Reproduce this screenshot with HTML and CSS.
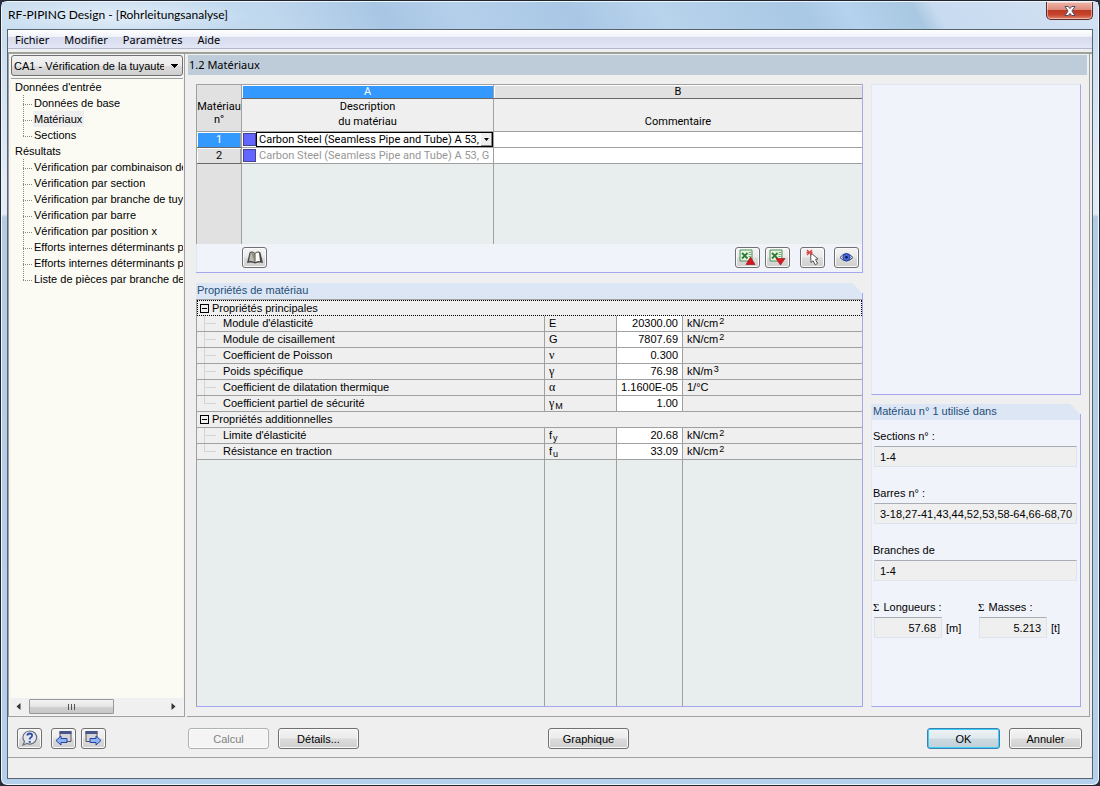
FILE: index.html
```html
<!DOCTYPE html>
<html lang="fr">
<head>
<meta charset="utf-8">
<title>RF-PIPING Design - [Rohrleitungsanalyse]</title>
<link rel="stylesheet" href="styles.css">
</head>
<body>
<div class="window">
  <header class="titlebar">
    <h1 class="title">RF-PIPING Design - [Rohrleitungsanalyse]</h1>
    <button class="close" aria-label="Fermer"><svg width="14" height="12" viewBox="0 0 14 12"><path d="M2 1.500h3.200L7 3.600 8.800 1.500H12L8.900 6l3.100 4.500H8.800L7 8.400l-1.800 2.100H2L5.100 6z" fill="#fff" stroke="#4c4e66" stroke-width="1"/></svg></button>
  </header>
  <div class="client">
    <nav class="menu">
      <button>Fichier</button><button>Modifier</button><button>Paramètres</button><button>Aide</button>
    </nav>
    <div class="workspace">
      <aside class="sidebar">
        <select class="case" aria-label="Cas"><option>CA1 - Vérification de la tuyaute</option></select>
        <div class="tree">
          <p>Données d'entrée</p>
          <ul>
            <li><span>Données de base</span></li>
            <li><span class="current">Matériaux</span></li>
            <li><span>Sections</span></li>
          </ul>
          <p>Résultats</p>
          <ul>
            <li><span>Vérification par combinaison de</span></li>
            <li><span>Vérification par section</span></li>
            <li><span>Vérification par branche de tuy</span></li>
            <li><span>Vérification par barre</span></li>
            <li><span>Vérification par position x</span></li>
            <li><span>Efforts internes déterminants p</span></li>
            <li><span>Efforts internes déterminants p</span></li>
            <li><span>Liste de pièces par branche de</span></li>
          </ul>
        </div>
        <div class="scroll">
          <svg width="5" height="7" viewBox="0 0 5 7"><path d="M4.500 0v7L.5 3.500z" fill="#333"/></svg>
          <div class="track"><div class="thumb"><i></i><i></i><i></i></div></div>
          <svg width="5" height="7" viewBox="0 0 5 7"><path d="M.5 0v7l4-3.500z" fill="#333"/></svg>
        </div>
      </aside>
      <main class="main">
        <h2 class="page-title">1.2 Matériaux</h2>
        <div class="columns">
          <div class="left">
            <section class="panel">
              <div class="grid-wrap top">
                <table class="materials">
                  <colgroup><col class="c-no"><col class="c-desc"><col></colgroup>
                  <thead>
                    <tr class="letters"><th rowspan="2" class="corner">Matériau<br>n°</th><th class="selected">A</th><th>B</th></tr>
                    <tr class="heads"><th>Description<br>du matériau</th><th class="low">Commentaire</th></tr>
                  </thead>
                  <tbody>
                    <tr><th class="num selected">1</th><td><div class="mat"><i class="swatch"></i><div class="combo"><span>Carbon Steel (Seamless Pipe and Tube) A 53, G</span><button aria-label="Ouvrir"><svg width="5" height="3" viewBox="0 0 5 3"><path d="M0 0h5L2.500 3z"/></svg></button></div></div></td><td></td></tr>
                    <tr><th class="num">2</th><td><div class="mat"><i class="swatch"></i><span class="dim">Carbon Steel (Seamless Pipe and Tube) A 53, G</span></div></td><td></td></tr>
                    <tr class="filler"><th></th><td></td><td></td></tr>
                  </tbody>
                </table>
              </div>
              <div class="tools">
                <button class="btn icon" aria-label="Bibliothèque"><svg width="18" height="15" viewBox="0 0 18 15"><path d="M1 13 3.500 2.500Q6 .5 9 3 12 .5 14.500 2.500L17 13q-4-1-8 .5-4-1.500-8-.5z" fill="#4a4a4a"/><path d="M3 11 4.500 3Q6.500 1.800 8.500 3.500V12Q6 10.500 3 11z" fill="#bdb9ae"/><path d="M9.500 3.500q2-1.700 3.500-.7l1 8.400q-2.500-.5-4.500 1z" fill="#fffef4"/><path d="M5.500 3 8.500 4v8z" fill="#8a867c"/></svg></button>
                <span class="space"></span>
                <button class="btn icon" aria-label="Exporter"><svg width="19" height="17" viewBox="0 0 19 17"><path d="M2 1h12v11H2z" fill="#e8f3e4" stroke="#4a9050"/><path d="M10.500 3.500h3M10.500 5.500h3M10.500 7.500h3" stroke="#7db27c"/><path d="M4 4 9.500 9.500M9.500 4 4 9.500" stroke="#2d7b35" stroke-width="1.800"/><path d="m12.500 8 4.500 7.500H8z" fill="#d81620" stroke="#8a0d12" stroke-width=".6"/></svg></button>
                <button class="btn icon g5" aria-label="Importer"><svg width="19" height="17" viewBox="0 0 19 17"><path d="M2 1h12v11H2z" fill="#e8f3e4" stroke="#4a9050"/><path d="M10.500 3.500h3M10.500 5.500h3M10.500 7.500h3" stroke="#7db27c"/><path d="M4 4 9.500 9.500M9.500 4 4 9.500" stroke="#2d7b35" stroke-width="1.800"/><path d="M8 9.500h9L12.500 16z" fill="#e01822" stroke="#8a0d12" stroke-width=".6"/></svg></button>
                <button class="btn icon g10" aria-label="Sélectionner"><svg width="18" height="17" viewBox="0 0 18 17"><path d="M6.500 3.500 14 10l-2.500.4 2 4-2.200 1.400-2.200-4L7 13.500z" fill="#fff" stroke="#444" stroke-width=".9"/><path d="M3 1 8 6M8 1 3 6M2.500 3.500h6" stroke="#d9444a" stroke-width="1.300"/></svg></button>
                <button class="btn icon g9" aria-label="Afficher"><svg width="17" height="15" viewBox="0 0 17 15"><path d="M2 7.500Q8-.5 15 7.500q-7 7-13 0z" fill="#d9dce8" stroke="#444b66" stroke-width="1"/><circle cx="8.500" cy="7.300" r="3.600" fill="#4a6be0" stroke="#2a44a4"/><circle cx="8.500" cy="7.300" r="1.200" fill="#0a1440"/></svg></button>
              </div>
            </section>
            <section class="panel props">
              <h3 class="panel-title">Propriétés de matériau</h3>
              <div class="grid-wrap">
                <table class="properties">
                  <colgroup><col class="c-name"><col class="c-sym"><col class="c-val"><col></colgroup>
                  <tbody>
                    <tr class="group focus"><th colspan="4"><div class="grp"><i class="minus"></i>Propriétés principales</div></th></tr>
                    <tr><th><div class="leaf">Module d'élasticité</div></th><td>E</td><td class="v">20300.00</td><td>kN/cm<sup>2</sup></td></tr>
                    <tr><th><div class="leaf">Module de cisaillement</div></th><td>G</td><td class="v">7807.69</td><td>kN/cm<sup>2</sup></td></tr>
                    <tr><th><div class="leaf">Coefficient de Poisson</div></th><td class="gr">ν</td><td class="v">0.300</td><td></td></tr>
                    <tr><th><div class="leaf">Poids spécifique</div></th><td class="gr">γ</td><td class="v">76.98</td><td>kN/m<sup>3</sup></td></tr>
                    <tr><th><div class="leaf">Coefficient de dilatation thermique</div></th><td class="gr">α</td><td class="v">1.1600E-05</td><td>1/°C</td></tr>
                    <tr><th><div class="leaf last">Coefficient partiel de sécurité</div></th><td class="gr">γ<sub>M</sub></td><td class="v">1.00</td><td></td></tr>
                    <tr class="group"><th colspan="4"><div class="grp"><i class="minus"></i>Propriétés additionnelles</div></th></tr>
                    <tr><th><div class="leaf">Limite d'élasticité</div></th><td>f<sub>y</sub></td><td class="v">20.68</td><td>kN/cm<sup>2</sup></td></tr>
                    <tr><th><div class="leaf last">Résistance en traction</div></th><td>f<sub>u</sub></td><td class="v">33.09</td><td>kN/cm<sup>2</sup></td></tr>
                    <tr class="filler"><th></th><td></td><td></td><td></td></tr>
                  </tbody>
                </table>
              </div>
            </section>
          </div>
          <div class="right">
            <section class="panel preview"></section>
            <section class="panel used">
              <h3 class="panel-title">Matériau n° 1 utilisé dans</h3>
              <div class="form">
                <div class="field"><label for="sec">Sections n° :</label><input id="sec" readonly value="1-4"></div>
                <div class="field"><label for="bar">Barres n° :</label><input id="bar" readonly value="3-18,27-41,43,44,52,53,58-64,66-68,70"></div>
                <div class="field"><label for="bra">Branches de</label><input id="bra" readonly value="1-4"></div>
                <div class="pair">
                  <div class="field"><label for="len"><span class="sum">Σ</span> Longueurs :</label><div class="unit"><input id="len" readonly value="57.68">[m]</div></div>
                  <div class="field"><label for="mas"><span class="sum">Σ</span> Masses :</label><div class="unit"><input id="mas" readonly value="5.213">[t]</div></div>
                </div>
              </div>
            </section>
          </div>
        </div>
      </main>
    </div>
    <footer class="actions">
      <button class="btn icon" aria-label="Aide"><svg width="19" height="17" viewBox="0 0 19 17"><path d="M9.500 1a7 6.500 0 1 1-2.500 12.500L3 15l1.500-3.500A7 6.500 0 0 1 9.500 1z" fill="#e6e8ee" stroke="#6b6f7c" stroke-width="1.200"/><path d="M7.200 5.500q.3-2 2.600-2 2.400.1 2.300 2 0 1.300-1.300 2-1.200.7-1.100 2" fill="none" stroke="#2d4da6" stroke-width="1.800"/><path d="M8.700 11h2v1.800h-2z" fill="#2d4da6"/></svg></button>
      <button class="btn icon g9" aria-label="Précédent"><svg width="19" height="17" viewBox="0 0 19 17"><path d="M6 1.500h11v10H6z" fill="#d4d5d9" stroke="#555"/><path d="M5.500 1h12v3h-12z" fill="#4a5688"/><path d="m2 10.500 5-4.500v2.500h6v4H7V15z" fill="#8fb4f4" stroke="#2344a4"/></svg></button>
      <button class="btn icon g5" aria-label="Suivant"><svg width="19" height="17" viewBox="0 0 19 17"><path d="M2 1.500h11v10H2z" fill="#d4d5d9" stroke="#555"/><path d="M1.500 1h12v3h-12z" fill="#4a5688"/><path d="m17 10.500-5-4.500v2.500H6v4h6V15z" fill="#8fb4f4" stroke="#2344a4"/></svg></button>
      <button class="btn wide calc" disabled>Calcul</button>
      <button class="btn wide g9">Détails...</button>
      <button class="btn wide graph">Graphique</button>
      <span class="space"></span>
      <button class="btn mid ok">OK</button>
      <button class="btn mid g9">Annuler</button>
    </footer>
    <div class="status"></div>
  </div>
</div>
</body>
</html>
```
FILE: styles.css
```css
* { box-sizing: border-box; }
body { margin: 0; background: #2a2e3c; font: 11px/16px "Liberation Sans", Arial, sans-serif; color: #000; }
button, input, select { font: inherit; color: inherit; margin: 0; }
h1, h2, h3, p, ul { margin: 0; padding: 0; font: inherit; }
ul { list-style: none; }
th { font-weight: normal; }
i { font-style: normal; }

.window {
  display: flex; flex-direction: column; min-height: 100vh; padding: 0 6px 6px;
  border: 1px solid #20242e; border-radius: 7px;
  background: linear-gradient(#c5dbef 0, #e2ebf6 180px, #e2ebf6 213px, #b3cce6 216px, #b5d0ec 100%);
  box-shadow: inset 0 0 0 1px #eef6fc;
}
.titlebar {
  display: flex; justify-content: space-between; align-items: flex-start; height: 27px; margin: 1px -5px 0; padding-right: 5px;
  background:
    radial-gradient(ellipse 130px 20px at 120px 14px, rgba(255,255,255,.5), transparent),
    linear-gradient(60deg, #cbdff1 0, #c0d8ee 25%, #a8c6e4 35%, #b4cfea 42%, #a9c7e5 52%, #b8d3ec 60%, #a9c8e4 73%, #b5d2ee 77%, #a8c7e0 83%, #c8dbf0 85%, #d3e1f3 100%);
}
.title { padding-left: 6px; font: 12px/26px Lato, "Open Sans", sans-serif; }
.close {
  display: flex; justify-content: center; align-items: center; width: 47px; height: 18px; padding: 0;
  border: 1px solid #5c2a28; border-top: 0; border-radius: 0 0 5px 5px;
  background: linear-gradient(#efb5a8, #dc8a78 48%, #bc3a24 50%, #c8452c 75%, #e0836c);
  box-shadow: inset 0 0 0 1px rgba(255,255,255,.45);
}
.client { flex: 1; display: flex; flex-direction: column; border: 1px solid #56646e; background: #efefef; }
.menu {
  display: flex; gap: 15px; height: 19px; padding-left: 7px; border-bottom: 1px solid #b4b8cc;
  background: linear-gradient(#fff, #f0f2fa 38%, #d6dbee 40%, #e2e6f4);
}
.menu button { padding: 0; border: 0; background: none; font: 11px/20px "Noto Sans", sans-serif; }

.workspace { flex: 1; display: flex; gap: 2px; margin-top: 3px; border-top: 2px solid #9ea09a; min-height: 0; }
.sidebar {
  display: flex; flex-direction: column; width: 177px; padding: 1px 1px 1px 2px;
  border: solid #a0a0a0; border-width: 0 1px 1px; background: #f4f4f4;
}
.case {
  appearance: none; height: 21px; width: 100%; padding: 0 18px 0 2px; overflow: hidden;
  border: 1px solid #707070; border-radius: 3px;
  background:
    conic-gradient(from -45deg at 50% 100%, #000 90deg, transparent 0) right 4px top 8px / 8px 4px no-repeat,
    linear-gradient(#f2f2f2, #ebebeb 50%, #ddd 51%, #cfcfcf);
}
.tree { flex: 1; margin-top: 2px; padding: 0 0 0 4px; overflow: hidden; white-space: nowrap; border-top: 1px solid #a0a0a0; background: #fbfbf3; }
.tree ul { padding-left: 8px; }
.tree li { display: flex; height: 16px; background: repeating-linear-gradient(#888 0 1px, transparent 1px 2px) left top / 1px 100% no-repeat; }
.tree li:last-child { background-size: 1px 9px; }
.tree li::before { content: ""; width: 9px; height: 9px; margin-right: 1px; border-bottom: 1px dotted #888; flex: none; }
.tree li span { padding: 0 2px 0 1px; }
.tree .current { background: #eee; }
.scroll { display: flex; align-items: center; height: 17px; padding: 0 7px 0 5px; background: #f0f0f0; }
.track { flex: 1; padding: 0 8px; }
.thumb {
  display: flex; justify-content: center; align-items: center; gap: 2px; width: 85px; height: 15px;
  border: 1px solid #979797; border-radius: 1px; background: linear-gradient(#f4f4f4, #e4e4e4 50%, #d0d0d0 52%, #c8c8c8);
}
.thumb i { width: 1px; height: 6px; background: #555; }

.main { flex: 1; display: flex; flex-direction: column; min-width: 0; padding: 1px 2px 9px 1px; border: solid #a0a0a0; border-width: 0 1px 1px 0; margin-right: 2px; }
.page-title { height: 20px; padding-left: 1px; font: 11px/20px "Noto Sans", sans-serif; background: #becbd8; }
.columns { flex: 1; display: flex; gap: 8px; padding: 9px 6px 0 8px; }
.left { flex: 1; display: flex; flex-direction: column; gap: 10px; min-width: 0; }
.right { width: 210px; display: flex; flex-direction: column; gap: 9px; }
.panel { border: 1px solid #dfe8f4; border-right-color: #a6a6ee; border-bottom-color: #a6a6ee; background: #f0f3fa; }
.left .panel { border-width: 0 1px 1px 0; }
.panel-title {
  height: 16px; padding-left: 1px; line-height: 15px; color: #1f4e79; background: #dce6f4;
  clip-path: polygon(0 0, calc(100% - 10px) 0, 100% 10px, 100% 100%, 0 100%);
}
.left .props { flex: 1; display: flex; flex-direction: column; border-right: 0; padding-right: 1px; }
.props { background: linear-gradient(#a6a6ee, #a6a6ee) right 0 top 10px / 1px calc(100% - 10px) no-repeat; }
.used {
  flex: 1; border-top: 0; border-right: 0; padding-right: 1px;
  background: linear-gradient(#a6a6ee, #a6a6ee) right 0 top 10px / 1px calc(100% - 10px) no-repeat, linear-gradient(transparent 16px, #f0f3fa 16px);
}
.preview { height: 311px; }

.grid-wrap { flex: 1; display: grid; border: solid #a0a0a0; border-width: 1px 0 0 1px; background: #e8eeee; }
.top { height: 160px; }
table { width: 100%; height: 100%; table-layout: fixed; border-collapse: separate; border-spacing: 0; line-height: 15px; }
tr { height: 16px; }
tr.filler { height: auto; }
th, td { height: 16px; padding: 0; overflow: hidden; white-space: nowrap; border: solid #a0a0a0; border-width: 0 1px 1px 0; background: #fff; }
th:last-child, td:last-child { border-right: 0; }
.filler th, .filler td { height: auto; border-bottom: 0; background: #e8eeee; }
.c-no { width: 45px; }
.c-desc { width: 252px; }
.materials { font-family: Roboto, sans-serif; }
.letters, .letters th { height: 14px; line-height: 13px; }
.materials thead th { background: #e1e1e1; }
.materials .letters th:not(.corner) { border-bottom-color: #686868; box-shadow: inset 1px 1px #fff; }
.materials .heads, .materials .heads th { height: 33px; padding-bottom: 2px; line-height: 15px; background: #efefef; }
.materials .low { vertical-align: bottom; }
.materials .corner { line-height: 13px; padding-top: 9px; }
.materials thead th.selected { background: #3399ff; color: #fff; }
.materials .num, .materials .filler th { background-color: #e1e1e1; }
.materials .num { border-bottom-color: #686868; box-shadow: inset 1px 1px #fff, inset -1px 0 #a0a0a0; }
.materials th.num.selected { background: #3399ff; color: #fff; }
.mat { display: flex; height: 15px; }
.swatch { width: 13px; height: 13px; margin: 1px 0 0 1px; border: 1px solid #44448c; background: #6464ff; flex: none; }
.combo { display: flex; flex: 1; min-width: 0; height: 15px; line-height: 13px; padding-left: 2px; border: 1px solid #000; }
.combo span { flex: 1; min-width: 0; overflow: hidden; }
.combo button { display: flex; align-items: center; justify-content: center; width: 11px; padding: 0; border: 1px solid #888; border-width: 0 1px 1px 0; background: #eee; }
.dim { padding-left: 3px; color: #969696; }
.tools { display: flex; height: 28px; padding: 3px 3px 0 45px; border-left: 1px solid #dfe8f4; }
.space { flex: 1; }

.c-name { width: 348px; }
.c-sym { width: 72px; }
.c-val { width: 66px; }
.properties th { text-align: left; }
.properties th, .properties td { background: #efefef; }
.properties td { padding-left: 4px; }
.properties td.v { padding: 0 4px 0 0; text-align: right; background: #fff; }
.properties .filler th, .properties .filler td { background: #e8eeee; }
.grp { display: flex; align-items: center; height: 15px; gap: 3px; padding-left: 3px; }
.minus { width: 9px; height: 9px; border: 1px solid #000; background: linear-gradient(#000, #000) center / 5px 1px no-repeat; }
.focus th { border: 1px dotted #000; }
.focus .grp { height: 13px; padding-left: 2px; }
.leaf { margin-left: 7px; padding-left: 19px; height: 15px; background: linear-gradient(#d4d4d4, #d4d4d4) 0 0 / 1px 100% no-repeat, linear-gradient(#d4d4d4, #d4d4d4) 0 7px / 12px 1px no-repeat; }
.leaf.last { background-size: 1px 8px, 12px 1px; }
.properties .gr { font-family: "Liberation Serif", serif; font-size: 12px; }
sup, sub { font: 9px/1 "Liberation Sans", Arial, sans-serif; vertical-align: baseline; padding-left: 1px; }
sup { position: relative; top: -3px; }
sub { position: relative; top: 2px; }

.form { display: flex; flex-direction: column; gap: 18px; padding: 8px 2px 0 1px; }
.field { display: flex; flex-direction: column; gap: 2px; }
.field input { width: 100%; height: 21px; padding: 0 0 0 5px; border: 1px solid #dde4ee; border-top-color: #a8acb4; outline: 0; background: #efefef; }
.field > input { margin-left: 1px; width: calc(100% - 2px); }
.pair { display: flex; }
.pair .field { width: 105px; flex: none; }
.unit { display: flex; align-items: center; gap: 4px; padding-left: 1px; }
.unit input { width: 68px; padding: 0 5px 0 0; text-align: right; }
.sum { font-family: "Liberation Serif", serif; margin-right: 1px; }

.btn {
  display: flex; justify-content: center; align-items: center; height: 21px; padding: 0; border: 1px solid #707070; border-radius: 3px;
  background: linear-gradient(#f4f4f4, #ebebeb 48%, #dcdcdc 52%, #cfcfcf); box-shadow: inset 0 0 0 1px #fafafa;
}
.btn.icon { width: 25px; }
.wide { width: 81px; }
.mid { width: 73px; }
.g5 { margin-left: 5px; }
.g9 { margin-left: 9px; }
.g10 { margin-left: 10px; }
.btn:disabled { color: #838383; border-color: #adb2b5; background: #f4f4f4; }
.ok { border-color: #3c7fb1; background: linear-gradient(#eef3f6, #e0e9ee 48%, #ccd9e0 52%, #c0d0d9); box-shadow: inset 0 0 0 1px #3cd0f8; }
.actions { display: flex; height: 40px; padding: 11px 10px 0 9px; }
.calc { margin-left: 82px; }
.graph { margin-left: 189px; }
.status { height: 21px; border-top: 1px solid #a0a0a0; }
```
